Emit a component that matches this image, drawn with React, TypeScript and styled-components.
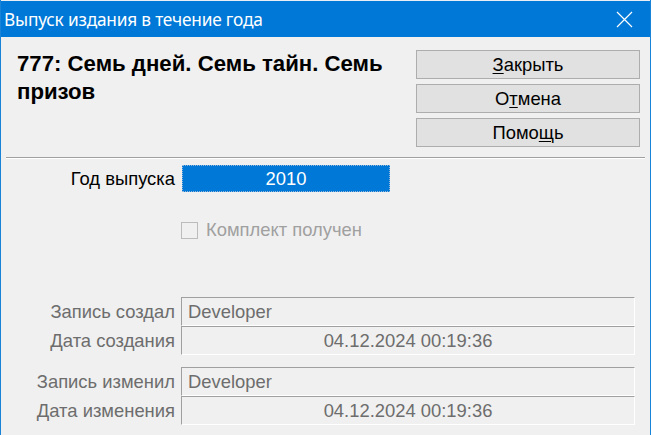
import React from "react";
import styled, { createGlobalStyle } from "styled-components";

const Global = createGlobalStyle`
  html, body { margin: 0; padding: 0; background: #f0f0f0; }
  body { width: 651px; height: 435px; overflow: hidden; }
`;

const Window = styled.div`
  width: 651px;
  height: 435px;
  box-sizing: border-box;
  border-left: 1px solid #1883d7;
  border-right: 1px solid #1883d7;
  background: #f0f0f0;
  display: flex;
  flex-direction: column;
  font-family: "Liberation Sans", Arial, sans-serif;
  overflow: hidden;
`;

const TitleBar = styled.div`
  height: 37px;
  flex: none;
  box-sizing: border-box;
  border-top: 1px solid #e8eef4;
  background: #0078d7;
  display: flex;
  align-items: center;
  justify-content: space-between;
  padding: 0 17px 0 3px;
  color: #fff;
`;

const TitleText = styled.span`
  font-family: "Noto Sans", "Open Sans", sans-serif;
  font-size: 17.3px;
  letter-spacing: -0.2px;
`;

const CloseIcon = styled.svg`
  width: 17px;
  height: 17px;
  display: block;
`;

const Header = styled.div`
  display: flex;
  justify-content: space-between;
  padding: 13px 10px 0 16px;
  height: 118px;
  flex: none;
  box-sizing: border-box;
`;

const Heading = styled.h1`
  margin: 0;
  width: 392px;
  font-size: 22.2px;
  font-weight: bold;
  line-height: 28px;
  color: #000;
`;

const ButtonColumn = styled.div`
  display: flex;
  flex-direction: column;
  gap: 5px;
  width: 224px;
`;

const Button = styled.button`
  height: 29px;
  flex: none;
  box-sizing: border-box;
  background: #e1e1e1;
  border: 1px solid #adadad;
  font-family: "Liberation Sans", Arial, sans-serif;
  font-size: 18.4px;
  color: #000;
  padding: 0;
  cursor: default;
  u { text-decoration-thickness: 1px; text-underline-offset: 2px; }
`;

const Separator = styled.div`
  margin: 2px 5px 0 5px;
  border-top: 1px solid #a0a0a0;
  border-bottom: 1px solid #ffffff;
`;

const Form = styled.div`
  display: flex;
  flex-direction: column;
  padding-top: 6px;
`;

const Row = styled.div<{ $gapTop?: number }>`
  display: flex;
  align-items: center;
  margin-top: ${(p) => p.$gapTop ?? 0}px;
`;

const Label = styled.div<{ $muted?: boolean }>`
  width: 174px;
  flex: none;
  text-align: right;
  font-size: 18.4px;
  color: ${(p) => (p.$muted ? "#6d6d6d" : "#000")};
  margin-right: 6px;
  white-space: nowrap;
`;

const YearField = styled.div`
  margin-left: 1px;
  width: 208px;
  height: 27px;
  box-sizing: border-box;
  background: #0078d7;
  border: 1px dotted #9ab8d8;
  color: #fff;
  font-size: 18.4px;
  display: flex;
  align-items: center;
  justify-content: center;
`;

const CheckRow = styled.div`
  display: flex;
  align-items: center;
  margin: 27px 0 0 180px;
  gap: 8px;
  height: 22px;
`;

const CheckBox = styled.span`
  width: 17px;
  height: 17px;
  box-sizing: border-box;
  border: 1px solid #bcbcbc;
  background: #f0f0f0;
  display: inline-block;
`;

const CheckLabel = styled.span`
  font-size: 18.4px;
  color: #a0a0a0;
`;

const Sunken = styled.div<{ $center?: boolean }>`
  width: 454px;
  height: 29px;
  box-sizing: border-box;
  border-top: 1px solid #a0a0a0;
  border-left: 1px solid #a0a0a0;
  border-right: 1px solid #ffffff;
  border-bottom: 1px solid #ffffff;
  color: #6d6d6d;
  font-size: 18.4px;
  display: flex;
  align-items: center;
  justify-content: ${(p) => (p.$center ? "center" : "flex-start")};
  padding-left: ${(p) => (p.$center ? 0 : 6)}px;
`;

export default function App() {
  return (
    <>
      <Global />
      <Window>
        <TitleBar>
          <TitleText>Выпуск издания в течение года</TitleText>
          <CloseIcon viewBox="0 0 17 17">
            <path d="M1 1 L16 16 M16 1 L1 16" stroke="#fff" strokeWidth="1.2" fill="none" />
          </CloseIcon>
        </TitleBar>
        <Header>
          <Heading>777: Семь дней. Семь тайн. Семь призов</Heading>
          <ButtonColumn>
            <Button>
              <u>З</u>акрыть
            </Button>
            <Button>
              О<u>т</u>мена
            </Button>
            <Button>
              Помо<u>щ</u>ь
            </Button>
          </ButtonColumn>
        </Header>
        <Separator />
        <Form>
          <Row>
            <Label>Год выпуска</Label>
            <YearField>2010</YearField>
          </Row>
          <CheckRow>
            <CheckBox />
            <CheckLabel>Комплект получен</CheckLabel>
          </CheckRow>
          <Row $gapTop={56}>
            <Label $muted>Запись создал</Label>
            <Sunken>Developer</Sunken>
          </Row>
          <Row>
            <Label $muted>Дата создания</Label>
            <Sunken $center>04.12.2024 00:19:36</Sunken>
          </Row>
          <Row $gapTop={12}>
            <Label $muted>Запись изменил</Label>
            <Sunken>Developer</Sunken>
          </Row>
          <Row>
            <Label $muted>Дата изменения</Label>
            <Sunken $center>04.12.2024 00:19:36</Sunken>
          </Row>
        </Form>
      </Window>
    </>
  );
}
